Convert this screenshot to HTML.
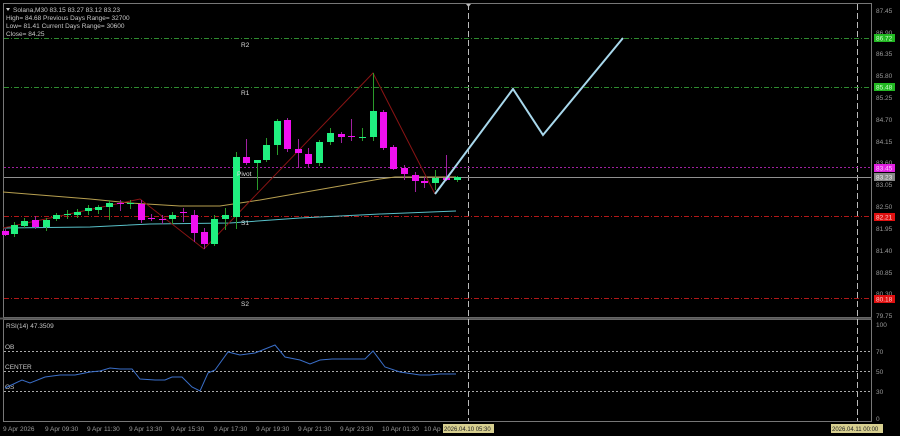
<!DOCTYPE html>
<html><head><meta charset="utf-8"><style>
html,body{margin:0;padding:0;background:#000;width:900px;height:436px;overflow:hidden}
svg{display:block}
text{font-family:"Liberation Sans",sans-serif;font-size:6.5px;fill:#c8c8c8}
.ax{fill:#9a9a9a;font-size:6.5px}
.g line{stroke:#2a9a2a}.g rect{fill:#20f080}
.m line{stroke:#a020a0}.m rect{fill:#f010f0}
</style></head><body>
<svg width="900" height="436" viewBox="0 0 900 436">
<rect width="900" height="436" fill="#000"/>
<rect x="3.5" y="3.5" width="868" height="314" fill="none" stroke="#777" stroke-width="1"/>
<rect x="3.5" y="319.5" width="868" height="102" fill="none" stroke="#777" stroke-width="1"/>
<line x1="0" y1="318.5" x2="872" y2="318.5" stroke="#555" stroke-width="2"/>
<line x1="468.5" y1="4" x2="468.5" y2="421" stroke="#bbb" stroke-dasharray="6,3" stroke-width="1"/>
<line x1="857.5" y1="4" x2="857.5" y2="421" stroke="#bbb" stroke-dasharray="6,3" stroke-width="1"/>
<polygon points="466,4 471,4 468.5,7" fill="#bbb"/>
<line x1="4" y1="38.5" x2="871" y2="38.5" stroke="#2e8b2e" stroke-dasharray="5,2,1,2"/>
<line x1="4" y1="87.5" x2="871" y2="87.5" stroke="#2e8b2e" stroke-dasharray="5,2,1,2"/>
<line x1="4" y1="167.5" x2="871" y2="167.5" stroke="#a020a0" stroke-dasharray="2,2"/>
<line x1="4" y1="177.5" x2="871" y2="177.5" stroke="#909090"/>
<line x1="4" y1="216.5" x2="871" y2="216.5" stroke="#b01818" stroke-dasharray="5,2,1,2"/>
<line x1="4" y1="298.5" x2="871" y2="298.5" stroke="#b01818" stroke-dasharray="5,2,1,2"/>
<polyline fill="none" stroke="#b8a050" stroke-width="1" points="3,192 40,195 90,199 130,203 180,206 220,206 260,200 300,193 340,186 380,179 395,177 456,177"/>
<polyline fill="none" stroke="#58c0c8" stroke-width="1" points="3,228 90,227 150,224 230,223 300,218 380,214 456,211"/>
<polyline fill="none" stroke="#8a1414" stroke-width="1" points="3,228 140,199 204,249 373,73 435,194"/>
<g class="m"><line x1="5.5" y1="229" x2="5.5" y2="236"/><rect x="2" y="231" width="7" height="4"/></g>
<g class="g"><line x1="14.5" y1="222" x2="14.5" y2="237"/><rect x="11" y="225" width="7" height="9"/></g>
<g class="g"><line x1="24.5" y1="218" x2="24.5" y2="228"/><rect x="21" y="221" width="7" height="5"/></g>
<g class="m"><line x1="35.5" y1="216" x2="35.5" y2="229"/><rect x="32" y="220" width="7" height="7"/></g>
<g class="g"><line x1="46.5" y1="218" x2="46.5" y2="231"/><rect x="43" y="220" width="7" height="7"/></g>
<g class="g"><line x1="56.5" y1="213" x2="56.5" y2="221"/><rect x="53" y="215" width="7" height="4"/></g>
<g class="g"><line x1="67.5" y1="210" x2="67.5" y2="219"/><rect x="64" y="214" width="7" height="1"/></g>
<g class="g"><line x1="77.5" y1="209" x2="77.5" y2="218"/><rect x="74" y="212" width="7" height="3"/></g>
<g class="g"><line x1="88.5" y1="205" x2="88.5" y2="215"/><rect x="85" y="208" width="7" height="3"/></g>
<g class="g"><line x1="98.5" y1="205" x2="98.5" y2="214"/><rect x="95" y="207" width="7" height="3"/></g>
<g class="g"><line x1="109.5" y1="200" x2="109.5" y2="220"/><rect x="106" y="203" width="7" height="4"/></g>
<g class="m"><line x1="120.5" y1="200" x2="120.5" y2="211"/><rect x="117" y="203" width="7" height="1"/></g>
<g class="g"><line x1="130.5" y1="200" x2="130.5" y2="209"/><rect x="127" y="203" width="7" height="1"/></g>
<g class="m"><line x1="141.5" y1="200" x2="141.5" y2="223"/><rect x="138" y="204" width="7" height="16"/></g>
<g class="m"><line x1="151.5" y1="214" x2="151.5" y2="221"/><rect x="148" y="218" width="7" height="1"/></g>
<g class="m"><line x1="162.5" y1="215" x2="162.5" y2="224"/><rect x="159" y="219" width="7" height="1"/></g>
<g class="g"><line x1="172.5" y1="212" x2="172.5" y2="224"/><rect x="169" y="215" width="7" height="4"/></g>
<g class="m"><line x1="183.5" y1="208" x2="183.5" y2="222"/><rect x="180" y="212" width="7" height="1"/></g>
<g class="m"><line x1="194.5" y1="210" x2="194.5" y2="242"/><rect x="191" y="215" width="7" height="18"/></g>
<g class="m"><line x1="204.5" y1="228" x2="204.5" y2="249"/><rect x="201" y="232" width="7" height="12"/></g>
<g class="g"><line x1="214.5" y1="215" x2="214.5" y2="246"/><rect x="211" y="219" width="7" height="25"/></g>
<g class="g"><line x1="225.5" y1="208" x2="225.5" y2="230"/><rect x="222" y="215" width="7" height="4"/></g>
<g class="g"><line x1="236.5" y1="152" x2="236.5" y2="229"/><rect x="233" y="157" width="7" height="60"/></g>
<g class="m"><line x1="246.5" y1="139" x2="246.5" y2="165"/><rect x="243" y="157" width="7" height="6"/></g>
<g class="g"><line x1="257.5" y1="160" x2="257.5" y2="190"/><rect x="254" y="160" width="7" height="3"/></g>
<g class="g"><line x1="266.5" y1="138" x2="266.5" y2="162"/><rect x="263" y="145" width="7" height="15"/></g>
<g class="g"><line x1="277.5" y1="119" x2="277.5" y2="155"/><rect x="274" y="121" width="7" height="24"/></g>
<g class="m"><line x1="287.5" y1="118" x2="287.5" y2="152"/><rect x="284" y="120" width="7" height="29"/></g>
<g class="m"><line x1="298.5" y1="139" x2="298.5" y2="168"/><rect x="295" y="149" width="7" height="4"/></g>
<g class="m"><line x1="308.5" y1="148" x2="308.5" y2="168"/><rect x="305" y="154" width="7" height="10"/></g>
<g class="g"><line x1="319.5" y1="140" x2="319.5" y2="166"/><rect x="316" y="142" width="7" height="21"/></g>
<g class="g"><line x1="330.5" y1="128" x2="330.5" y2="145"/><rect x="327" y="133" width="7" height="9"/></g>
<g class="m"><line x1="341.5" y1="132" x2="341.5" y2="143"/><rect x="338" y="134" width="7" height="3"/></g>
<g class="m"><line x1="351.5" y1="119" x2="351.5" y2="141"/><rect x="348" y="136" width="7" height="1"/></g>
<g class="g"><line x1="362.5" y1="128" x2="362.5" y2="141"/><rect x="359" y="137" width="7" height="1"/></g>
<g class="g"><line x1="373.5" y1="73" x2="373.5" y2="141"/><rect x="370" y="111" width="7" height="26"/></g>
<g class="m"><line x1="383.5" y1="110" x2="383.5" y2="150"/><rect x="380" y="112" width="7" height="36"/></g>
<g class="m"><line x1="393.5" y1="145" x2="393.5" y2="170"/><rect x="390" y="147" width="7" height="22"/></g>
<g class="m"><line x1="404.5" y1="165" x2="404.5" y2="180"/><rect x="401" y="168" width="7" height="6"/></g>
<g class="m"><line x1="415.5" y1="172" x2="415.5" y2="192"/><rect x="412" y="175" width="7" height="6"/></g>
<g class="m"><line x1="424.5" y1="177" x2="424.5" y2="188"/><rect x="421" y="181" width="7" height="2"/></g>
<g class="g"><line x1="435.5" y1="170" x2="435.5" y2="190"/><rect x="432" y="178" width="7" height="5"/></g>
<g class="m"><line x1="446.5" y1="155" x2="446.5" y2="181"/><rect x="443" y="178" width="7" height="2"/></g>
<g class="g"><line x1="457.5" y1="176" x2="457.5" y2="182"/><rect x="454" y="177" width="7" height="3"/></g>
<polyline fill="none" stroke="#a8d8ec" stroke-width="2" points="435,194 513,89 543,135 623,38"/>
<text x="241" y="47" style="fill:#ddd">R2</text>
<text x="241" y="95" style="fill:#ddd">R1</text>
<text x="237" y="176" style="fill:#ddd">Pivot</text>
<text x="241" y="225" style="fill:#ddd">S1</text>
<text x="241" y="306" style="fill:#ddd">S2</text>
<polygon points="6,8 10,8 8,11" fill="#ccc"/>
<text x="13" y="12">Solana,M30  83.15 83.27 83.12 83.23</text>
<text x="6" y="20">High= 84.68    Previous Days Range= 32700</text>
<text x="6" y="28">Low= 81.41    Current Days Range= 30600</text>
<text x="6" y="36">Close= 84.25</text>
<g>
<text x="876" y="13" class="ax">87.45</text>
<text x="876" y="35" class="ax">86.90</text>
<text x="876" y="56" class="ax">86.35</text>
<text x="876" y="78" class="ax">85.80</text>
<text x="876" y="100" class="ax">85.25</text>
<text x="876" y="122" class="ax">84.70</text>
<text x="876" y="144" class="ax">84.15</text>
<text x="876" y="165" class="ax">83.60</text>
<text x="876" y="187" class="ax">83.05</text>
<text x="876" y="209" class="ax">82.50</text>
<text x="876" y="231" class="ax">81.95</text>
<text x="876" y="253" class="ax">81.40</text>
<text x="876" y="275" class="ax">80.85</text>
<text x="876" y="296" class="ax">80.30</text>
<text x="876" y="318" class="ax">79.75</text>
</g>
<rect x="874" y="34" width="21" height="8" fill="#22b822"/><text x="876" y="40.5" style="fill:#cfc">86.72</text>
<rect x="874" y="83" width="21" height="8" fill="#22b822"/><text x="876" y="89.5" style="fill:#cfc">85.48</text>
<rect x="874" y="164" width="21" height="8" fill="#e020e0"/><text x="876" y="170.5" style="fill:#fcf">83.45</text>
<rect x="874" y="173" width="21" height="8" fill="#888"/><text x="876" y="179.5" style="fill:#eee">83.23</text>
<rect x="874" y="213" width="21" height="8" fill="#e01010"/><text x="876" y="219.5" style="fill:#fcc">82.21</text>
<rect x="874" y="295" width="21" height="8" fill="#e01010"/><text x="876" y="301.5" style="fill:#fcc">80.18</text>
<text x="6" y="328">RSI(14) 47.3509</text>
<line x1="4" y1="351.5" x2="871" y2="351.5" stroke="#aaa" stroke-dasharray="2,2"/>
<line x1="4" y1="371.5" x2="871" y2="371.5" stroke="#aaa" stroke-dasharray="2,2"/>
<line x1="4" y1="391.5" x2="871" y2="391.5" stroke="#aaa" stroke-dasharray="2,2"/>
<text x="5" y="349">OB</text>
<text x="5" y="369">CENTER</text>
<text x="5" y="389">OS</text>
<polyline fill="none" stroke="#3a6ec8" stroke-width="1" points="5,388 22,380 30,383 45,377 60,375 75,375 90,372 100,371 110,368 120,369 132,369 140,379 155,380 165,380 172,377 182,377 192,387 200,391 208,373 215,370 228,352 240,355 255,353 275,345 285,357 300,360 310,364 320,360 332,359 355,359 365,359 373,351 385,367 400,372 420,375 430,375 440,374 456,374"/>
<text x="876" y="327" class="ax">100</text>
<text x="876" y="354" class="ax">70</text>
<text x="876" y="374" class="ax">50</text>
<text x="876" y="394" class="ax">30</text>
<text x="876" y="421" class="ax">0</text>
<text x="3" y="431" class="ax">9 Apr 2026</text>
<text x="45" y="431" class="ax">9 Apr 09:30</text>
<text x="87" y="431" class="ax">9 Apr 11:30</text>
<text x="129" y="431" class="ax">9 Apr 13:30</text>
<text x="171" y="431" class="ax">9 Apr 15:30</text>
<text x="214" y="431" class="ax">9 Apr 17:30</text>
<text x="256" y="431" class="ax">9 Apr 19:30</text>
<text x="298" y="431" class="ax">9 Apr 21:30</text>
<text x="340" y="431" class="ax">9 Apr 23:30</text>
<text x="382" y="431" class="ax">10 Apr 01:30</text>
<text x="424" y="431" class="ax">10 Ap</text>
<rect x="443" y="424" width="51" height="9" fill="#d8d090"/><text x="444" y="431" style="fill:#222;font-size:6px">2026.04.10 05:30</text>
<rect x="831" y="424" width="52" height="9" fill="#d8d090"/><text x="832" y="431" style="fill:#222;font-size:6px">2026.04.11 00:00</text>
</svg>
</body></html>
